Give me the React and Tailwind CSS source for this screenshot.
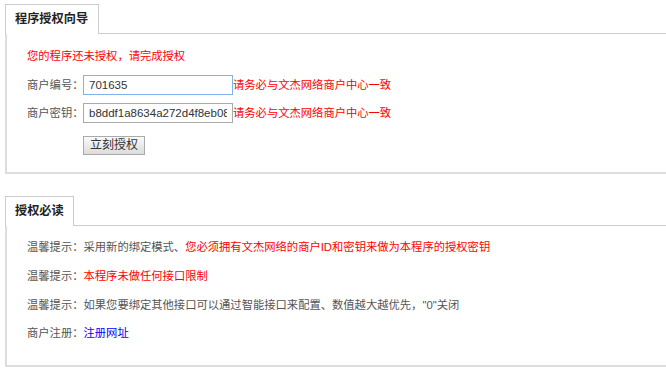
export default function App() {
  const font = { fontFamily: '"Liberation Sans", "Noto Sans CJK SC", sans-serif' };

  return (
    <div className="w-[666px] h-[389px] bg-white pt-[4px] pl-[5px] text-[11.3px] text-[#555] whitespace-nowrap" style={font}>
      {/* 程序授权向导 */}
      <div>
        <div className="flex items-end">
          <div className="h-[30px] w-[94px] border-t border-l border-r border-[#ccc] pl-[9px] flex items-center font-bold text-[12.2px] text-[#222]">
            程序授权向导
          </div>
          <div className="flex-1 border-b border-[#ccc]" />
        </div>
        <div className="border-l-2 border-b-2 border-[#ddd] pl-[20px] pt-[12px] pb-[17px]">
          <div className="h-[20px] leading-[20px] text-[#f00]">您的程序还未授权，请完成授权</div>
          <div className="flex items-center mt-[9px]">
            <span className="w-[56px] shrink-0">商户编号：</span>
            <input
              defaultValue="701635"
              className="w-[150px] shrink-0 h-[20px] border border-[#7eb4ea] px-[5px] text-[11.5px] text-[#333] outline-none"
            />
            <span className="text-[#f00]">请务必与文杰网络商户中心一致</span>
          </div>
          <div className="flex items-center mt-[8px]">
            <span className="w-[56px] shrink-0">商户密钥：</span>
            <input
              defaultValue="b8ddf1a8634a272d4f8eb08c3e5a1f7d"
              className="w-[150px] shrink-0 h-[20px] border border-[#aaa] px-[5px] text-[11.5px] text-[#333] outline-none"
            />
            <span className="text-[#f00]">请务必与文杰网络商户中心一致</span>
          </div>
          <div className="pl-[56px] mt-[13px]">
            <button className="w-[62px] h-[19px] border border-[#aaa] bg-gradient-to-b from-[#fafafa] to-[#dcdcdc] text-[12px] text-[#333] leading-[17px]">
              立刻授权
            </button>
          </div>
        </div>
      </div>

      {/* 授权必读 */}
      <div className="mt-[22px]">
        <div className="flex items-end">
          <div className="h-[30px] w-[69px] border-t border-l border-r border-[#ccc] pl-[9px] flex items-center font-bold text-[12.2px] text-[#222]">
            授权必读
          </div>
          <div className="flex-1 border-b border-[#ccc]" />
        </div>
        <div className="border-l-2 border-b-2 border-[#ddd] pl-[20px] pt-[7px] pb-[18px]">
          <div className="h-[29px] leading-[29px]">
            温馨提示：采用新的绑定模式、<span className="text-[#f00]">您必须拥有文杰网络的商户ID和密钥来做为本程序的授权密钥</span>
          </div>
          <div className="h-[29px] leading-[29px]">
            温馨提示：<span className="text-[#f00]">本程序未做任何接口限制</span>
          </div>
          <div className="h-[28px] leading-[28px]">
            温馨提示：如果您要绑定其他接口可以通过智能接口来配置、数值越大越优先，"0"关闭
          </div>
          <div className="h-[28px] leading-[28px]">
            商户注册：<a className="text-[#00f]">注册网址</a>
          </div>
        </div>
      </div>
    </div>
  );
}
